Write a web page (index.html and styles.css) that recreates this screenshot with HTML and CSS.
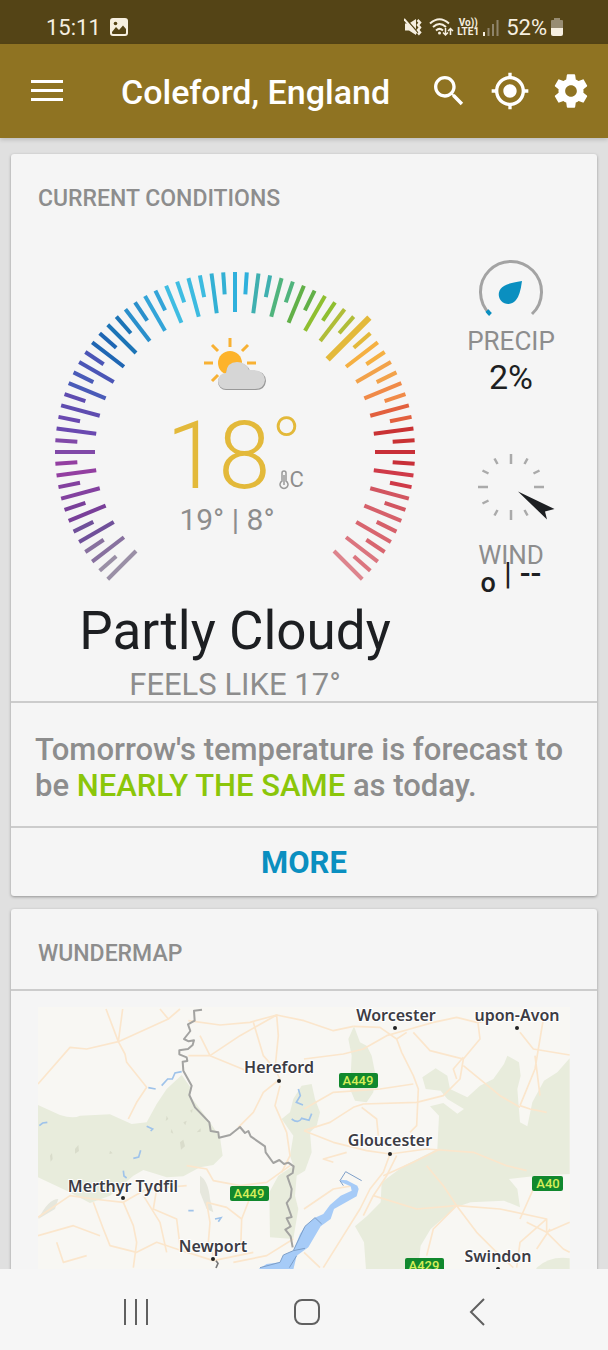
FILE: index.html
```html
<!DOCTYPE html>
<html lang="en">
<head>
    <meta charset="UTF-8">
    <meta name="viewport" content="width=device-width, initial-scale=1.0">
    <title>Coleford, England</title>
    <link rel="stylesheet" href="styles.css">
</head>
<body>
<div class="status-bar">
    <span class="clock">15:11</span>
    <svg class="status-icon" width="18" height="18" viewBox="0 0 18 18">
        <rect width="18" height="18" rx="3" fill="#f6efe0"/>
        <path d="M2 14 L6 9 L9 12 L13 7.500 L16 11 V15 Q16 16 15 16 H3 Q2 16 2 15Z" fill="#544416"/>
        <circle cx="5.500" cy="5.500" r="1.800" fill="#544416"/>
    </svg>
    <div class="status-right">
        <svg width="18" height="18" viewBox="0 0 18 18">
            <path d="M1 5.500 H5 L12 1 V17 L5 12.500 H1Z" fill="#f6efe0"/>
            <path d="M1 0 L13 13.500" stroke="#544416" stroke-width="1.500"/>
            <path d="M0 1 L12.500 15.500" stroke="#f6efe0" stroke-width="2"/>
            <path d="M13.500 2 l2.500 2.500 l-2 2.500 l2 2.500 l-2 2.500 l2 2.500 l-2 2" stroke="#f6efe0" stroke-width="2.500" fill="none"/>
        </svg>
        <svg class="wifi" width="25" height="20" viewBox="0 0 25 20">
            <g fill="none" stroke="#f6efe0" stroke-width="2">
                <path d="M1 6.500 Q10.500 -2 20 6.500"/>
                <path d="M4 10 Q10.500 4 17 10"/>
                <path d="M7 13.500 Q10.500 10.300 14 13.500"/>
            </g>
            <circle cx="10.500" cy="16" r="1.500" fill="#f6efe0"/>
            <path d="M16.500 11 V18 M14 15.500 L16.500 18 L19 15.500 M21.500 18 V11.500 M19 14 L21.500 11.500 L24 14" fill="none" stroke="#f6efe0" stroke-width="1.500"/>
        </svg>
        <span class="volte"><span>Vo))</span><span>LTE1</span></span>
        <svg class="signal" width="16" height="17" viewBox="0 0 16 17">
            <path d="M1 17 V13" stroke="#f6efe0" stroke-width="2"/>
            <path d="M5.500 17 V9 M10 17 V5 M14.500 17 V1" stroke="#8f846a" stroke-width="2"/>
        </svg>
        <span class="battery-text">52%</span>
        <svg width="12" height="18" viewBox="0 0 12 18">
            <path d="M3 0 H9 V2 H11 Q12 2 12 3 V10 H0 V3 Q0 2 1 2 H3Z" fill="#978c72"/>
            <path d="M0 10 H12 V16 Q12 18 10 18 H2 Q0 18 0 16Z" fill="#f6efe0"/>
        </svg>
    </div>
</div>

<header class="app-bar">
    <button class="icon-button" aria-label="Menu">
        <svg width="32" height="24" viewBox="0 0 32 24"><path d="M0 2.500 H32 M0 11.500 H32 M0 20.500 H32" stroke="#fff" stroke-width="3"/></svg>
    </button>
    <h1 class="location">Coleford, England</h1>
    <div class="actions">
        <button class="icon-button" aria-label="Search">
            <svg width="40" height="40" viewBox="0 0 24 24" fill="#fff"><path d="M15.500 14h-.79l-.28-.27C15.410 12.590 16 11.110 16 9.500 16 5.910 13.090 3 9.500 3S3 5.910 3 9.500 5.910 16 9.500 16c1.610 0 3.090-.59 4.230-1.570l.27.28v.79l5 4.990L20.490 19l-4.990-5zm-6 0C7.010 14 5 11.990 5 9.500S7.010 5 9.500 5 14 7.010 14 9.500 11.990 14 9.500 14z"/></svg>
        </button>
        <button class="icon-button" aria-label="My location">
            <svg width="40" height="40" viewBox="0 0 24 24" fill="#fff"><path d="M12 8c-2.210 0-4 1.790-4 4s1.790 4 4 4 4-1.790 4-4-1.790-4-4-4zm8.940 3c-.46-4.170-3.770-7.480-7.940-7.940V1h-2v2.060C6.830 3.520 3.520 6.830 3.060 11H1v2h2.060c.46 4.170 3.770 7.480 7.940 7.940V23h2v-2.060c4.170-.46 7.480-3.770 7.940-7.940H23v-2h-2.060zM12 19c-3.870 0-7-3.130-7-7s3.130-7 7-7 7 3.130 7 7-3.130 7-7 7z"/></svg>
        </button>
        <button class="icon-button" aria-label="Settings">
            <svg width="40" height="40" viewBox="0 0 24 24" fill="#fff"><path d="M19.430 12.980c.04-.32.07-.64.07-.98s-.03-.66-.07-.98l2.110-1.650c.19-.15.24-.42.12-.64l-2-3.460c-.12-.22-.39-.3-.61-.22l-2.490 1c-.52-.4-1.080-.73-1.690-.98l-.38-2.650C14.460 2.180 14.250 2 14 2h-4c-.25 0-.46.18-.49.42l-.38 2.650c-.61.25-1.170.59-1.690.98l-2.490-1c-.23-.09-.49 0-.61.22l-2 3.460c-.13.22-.07.49.12.64l2.110 1.650c-.04.32-.07.65-.07.98s.03.66.07.98l-2.110 1.650c-.19.15-.24.42-.12.64l2 3.460c.12.22.39.3.61.22l2.490-1c.52.4 1.080.73 1.690.98l.38 2.650c.03.24.24.42.49.42h4c.25 0 .46-.18.49-.42l.38-2.650c.61-.25 1.170-.59 1.690-.98l2.490 1c.23.09.49 0 .61-.22l2-3.460c.12-.22.07-.49-.12-.64l-2.110-1.650zM12 15.500c-1.930 0-3.500-1.570-3.500-3.500s1.570-3.500 3.500-3.500 3.500 1.570 3.500 3.500-1.570 3.500-3.500 3.500z"/></svg>
        </button>
    </div>
</header>

<main class="content">
    <section class="card">
        <h2 class="card-title">CURRENT CONDITIONS</h2>
        <div class="conditions">
            <div class="main-reading">
                <div class="gauge">
                    <svg class="gauge-ring" id="ring" width="384" height="324" viewBox="-192 -193 384 324"></svg>
                    <div class="gauge-center">
                        <svg width="62" height="54" viewBox="0 0 62 54">
                            <g stroke="#f8b133" stroke-width="3">
                                <path d="M26 0 V9 M8 7 L14 13 M0 25 H9 M8 43 L14 37 M38 13 L44 7 M43 25 H52"/>
                            </g>
                            <circle cx="26" cy="25" r="12" fill="#fdb32b"/>
                            <path d="M22 52 A8 8 0 0 1 22 36 Q23 25 34 25 Q43 25 46 33 Q61 31 62 43 Q61 52 52 52Z" fill="#999"/>
                            <path d="M22 51 A8 8 0 0 1 22 35 Q23 24 33 24 Q42 24 45 32 Q60 31 61 42 Q60 51 51 51Z" fill="#d6d6d6"/>
                        </svg>
                        <div class="temp">
                            <span class="temp-value">18</span>
                            <span class="temp-side">
                                <span class="degree">°</span>
                                <span class="unit">
                                    <svg width="10" height="20" viewBox="0 0 10 20" fill="none" stroke="#999" stroke-width="1.500">
                                        <path d="M3 11 V3 Q3 1 5 1 Q7 1 7 3 V11 A4 4 0 1 1 3 11Z"/>
                                        <path d="M5 5 V15"/>
                                    </svg>C
                                </span>
                            </span>
                        </div>
                        <div class="high-low">19° | 8°</div>
                    </div>
                </div>
                <div class="summary">Partly Cloudy</div>
                <div class="feels">FEELS LIKE 17°</div>
            </div>
            <div class="side">
                <div class="metric">
                    <svg width="66" height="66" viewBox="-33 -33 66 66">
                        <path d="M-21 22 A30.500 30.500 0 1 1 21 22" fill="none" stroke="#a3a3a3" stroke-width="3"/>
                        <path d="M-20.500 22.500 A30.500 30.500 0 0 1 -24 18.500" fill="none" stroke="#0a8fc0" stroke-width="4"/>
                        <path d="M11 -11 Q9 4 5 8 A9.500 9.500 0 1 1 -7 -6 Q-3 -9 11 -11Z" fill="#0a8fc0"/>
                    </svg>
                    <span class="metric-name">PRECIP</span>
                    <span class="metric-value">2%</span>
                </div>
                <div class="metric wind">
                    <svg width="88" height="68" viewBox="-44 -34 88 68">
                        <path d="M0 -33 V-23 M0 23 V33 M-33 0 H-23 M23 0 H33 M-16.500 -28.500 L-13.500 -23 M16.500 -28.500 L13.500 -23 M-28.500 -16.500 L-22.500 -13.500 M28.500 -16.500 L22.500 -13.500 M-28.500 16.500 L-22.500 13.500 M-16.500 28.500 L-13.500 23 M16.500 28.500 L13.500 23" stroke="#aaa" stroke-width="2.500"/>
                        <path d="M7 4.500 L43.500 22 L34 24.500 L36 32.500Z" fill="#1d1f22"/>
                    </svg>
                    <span class="metric-name">WIND</span>
                    <span class="wind-value"><span class="wind-dir">o</span><span>|</span><span class="wind-speed">--</span></span>
                </div>
            </div>
        </div>
        <p class="forecast">Tomorrow's temperature is forecast to be <span class="same">NEARLY THE SAME</span> as today.</p>
        <button class="more">MORE</button>
    </section>

    <section class="card">
        <h2 class="card-title map-title">WUNDERMAP</h2>
        <div class="map-box">
            <svg class="map" viewBox="0 0 532 300">
                <rect width="532" height="300" fill="#f8f7f3"/>
                <g transform="translate(-38 -18) scale(.33333)">
                    <!-- parks -->
                    <g fill="#e8ecdc">
                        <path d="M114 348 L180 378 Q220 390 240 380 L330 376 L395 405 L440 400 L470 345 L500 300 L545 258 L575 300 L570 320 L630 400 L660 445 L668 500 L640 528 L600 535 L550 562 L500 565 L430 543 L400 560 L330 620 L270 642 L200 605 L114 565Z"/>
                        <path d="M880 330 L905 290 L935 285 L945 330 L960 370 L950 410 L930 430 L935 490 L915 545 L890 560 L885 620 L895 660 L880 750 L810 745 L808 610 L835 560 L880 530 L870 500 L880 440 L845 390 L870 370Z"/>
                        <path d="M1062 112 L1080 160 L1100 170 L1115 200 L1125 250 L1120 310 L1100 340 L1065 335 L1050 300 L1055 200 L1045 150Z"/>
                        <path d="M1267 265 L1307 238 L1342 260 L1350 300 L1402 325 L1440 290 L1480 270 L1512 225 L1522 200 L1557 220 L1562 260 L1552 300 L1560 400 L1582 412 L1597 340 L1632 275 L1672 250 L1709 208 V555 L1612 560 L1527 570 L1552 600 L1560 655 L1512 635 L1412 640 L1367 655 L1292 720 L1262 770 L1250 870 L1100 870 L1092 760 L1065 712 L1102 680 L1142 640 L1145 580 L1212 530 L1312 480 L1317 380 L1290 352 L1330 342 L1372 374 L1392 360 L1342 330 L1322 305 L1277 300Z"/>
                        <path d="M1610 836 Q1650 800 1709 808 V870 H1600Z"/>
                    </g>
                    <path d="M600 560 q25 15 30 70 l10 40 -20 -10 -20 -50Z M115 690 q30 -60 60 -60 l-10 30Z" fill="#e6e7dd"/>
                    <g fill="#d9dccb">
                        <path d="M225 480 l10 -12 2 18 -12 8Z M150 500 l6 -8 2 18 -6 8Z M540 460 l10 -8 5 20 -12 10Z M500 380 l5 10 -8 6Z M550 400 l10 -5 -4 14Z M590 430 l12 -12 0 10Z M570 365 l8 -5 -2 12Z M330 485 l8 8 -10 2Z M515 420 l5 14 -8 -4Z"/>
                    </g>
                    <!-- main roads -->
                    <g fill="none" stroke="#fbe6cc" stroke-width="5" stroke-linejoin="round">
                        <path d="M114 285 L210 175 L260 180 L355 158 L375 195 L380 220 L440 295 L410 340 L385 390 M355 158 L505 90 L540 60 M355 158 L318 60 M355 158 L368 60 M505 90 L480 60 M565 95 L660 108 L750 100 L830 78 L912 95 L1000 125 L1060 112"/>
                        <path d="M565 200 L630 200 L720 140 L830 78 L835 140 L825 240 L840 270 M630 200 L600 140 M630 200 L740 245 M760 100 L790 200 L825 240 M840 270 L790 310 L760 370 L715 415 M840 290 L825 350 L860 430 L870 500 L845 550"/>
                        <path d="M560 530 L620 540 L640 575 L720 590 L800 580 L870 530 M620 640 L630 700 L625 760 L640 800 M620 640 L680 655 L725 690 L722 780 M725 690 L760 600 M700 820 L800 800 L880 750 M114 685 L210 620 L280 630 L370 640 L400 710 L410 760 L400 836 M280 640 L310 720 L330 770 L410 790 L470 760 L530 780 L640 815 L760 790"/>
                        <path d="M430 620 L480 700 L500 790 M470 600 L460 660 L530 690 L540 770 M370 640 L440 600 L560 590 M114 740 L220 710 L300 740 M170 760 L190 820 L260 800"/>
                        <path d="M912 210 L1030 195 L1090 180 L1160 140 L1230 120 L1300 100 L1370 85 L1430 100 L1560 80 M1060 112 L1140 115 L1190 150 L1220 130 M1190 150 L1205 190 L1240 260 L1255 300 L1250 410 L1230 430"/>
                        <path d="M1240 130 L1290 185 L1370 205 L1390 210 L1440 150 L1430 70 M1390 210 L1380 270 L1330 320 L1250 340 L1090 345 L1060 355 L990 400 L912 425 M1390 230 L1500 320 L1560 355 M912 360 L1000 310 L1140 300 L1240 285 M1390 205 L1360 240 L1370 270"/>
                        <path d="M1560 130 L1600 180 L1709 198 M1630 90 L1605 240 L1560 350 M1605 200 L1620 320 M1560 350 L1590 360 L1640 370"/>
                        <path d="M912 425 L1000 460 L1100 485 L1170 495 L1280 480 L1420 490 L1520 530 L1580 545 M1170 495 L1150 550 L1110 600 L1080 660 L1030 740 L970 836 M1190 500 L1160 560 L1120 620 L1090 680 M1280 530 L1330 590 L1370 650 L1430 730 L1500 800 L1540 836"/>
                        <path d="M1150 560 L1240 520 L1320 480 M1370 650 L1250 660 L1120 620 M1370 650 L1500 660 L1640 690 L1560 760 L1550 836 M1370 650 L1300 720 L1280 800 M1640 690 L1640 730 L1709 700 M1640 730 L1690 780 L1709 790 M1640 730 L1580 700 M1600 600 L1560 690 M1650 720 L1610 780"/>
                        <path d="M912 660 L1000 600 L1060 590 M1085 355 L1130 390 L1135 440 M1000 520 L970 510 L1040 490 M912 790 L960 836"/>
                    </g>
                    <!-- water -->
                    <path d="M760 850 L800 825 L840 820 L850 798 L880 785 L900 735 L915 712 L945 686 L970 675 L990 648 L1022 620 L1055 605 L1052 592 L1024 580 L1020 572 L1040 574 L1072 590 L1076 600 L1070 622 L1002 660 L992 690 L962 712 L925 775 L890 800 L878 850Z" fill="#a6cbf7"/>
                    <path d="M1030 590 L1020 575 L1037 548 L1085 575 M780 836 L840 820 L850 798 L880 785 L915 712 L945 686 L965 705 M880 785 L915 778 M868 836 L890 800" fill="none" stroke="#7d9fc8" stroke-width="3"/>
                    <path d="M485 290 l18 -20 14 0 8 -18 20 -4 M445 296 l22 4 M118 410 l10 -8 14 -2 M440 412 l18 8 -6 6 M400 508 l16 -4 6 -20 M370 545 l2 16 8 6 M645 690 l18 -4 -8 12 M895 300 l6 20 -12 20 20 8 M875 390 q20 15 30 -2 l22 6 8 -20 M565 665 l16 0" fill="none" stroke="#9fc3ea" stroke-width="5"/>
                    <!-- England / Wales border -->
                    <path d="M606 62 L582 65 L584 95 L564 106 L571 126 L552 150 L566 157 L582 154 L578 168 L564 180 L538 184 L538 196 L560 205 L562 216 L548 218 L550 245 L575 290 L568 318 L585 355 L628 400 L632 426 L655 430 L657 446 L690 438 L720 414 L735 432 L745 426 L752 442 L795 472 L797 490 L820 522 L838 513 L852 525 L865 521 L881 532 L878 552 L862 562 L875 600 L872 626 L860 642 L875 684 L860 688 L872 712 L856 722 L872 742 L878 775" fill="none" stroke="#a3a3a1" stroke-width="6" stroke-linejoin="round"/>
                    <path d="M648 815 l6 8 -6 14" fill="none" stroke="#777" stroke-width="5"/>
                </g>
                <g class="town">
                    <text x="358" y="14">Worcester</text>
                    <text x="479" y="14">upon-Avon</text>
                    <text x="241" y="66">Hereford</text>
                    <text x="352" y="139">Gloucester</text>
                    <text x="85" y="185">Merthyr Tydfil</text>
                    <text x="175" y="245">Newport</text>
                    <text x="460" y="255">Swindon</text>
                </g>
                <g fill="#222">
                    <circle cx="357" cy="21" r="2"/><circle cx="479" cy="21" r="2"/><circle cx="241" cy="74" r="2"/>
                    <circle cx="352" cy="147" r="2"/><circle cx="85" cy="191" r="2"/><circle cx="175" cy="252" r="2"/><circle cx="460" cy="262" r="2"/>
                </g>
                <g fill="#11882d">
                    <rect x="301" y="66" width="39" height="15" rx="2"/><rect x="192" y="179" width="39" height="15" rx="2"/>
                    <rect x="494" y="169" width="31" height="15" rx="2"/><rect x="367" y="251" width="39" height="15" rx="2"/>
                </g>
                <g class="road">
                    <text x="320" y="78">A449</text>
                    <text x="211" y="191">A449</text>
                    <text x="510" y="181">A40</text>
                    <text x="386" y="263">A429</text>
                </g>
            </svg>
        </div>
    </section>
</main>

<nav class="nav-bar">
    <button class="icon-button" aria-label="Recent apps">
        <svg width="26" height="28" viewBox="0 0 26 28"><path d="M2 1 V27 M13 1 V27 M24 1 V27" stroke="#606060" stroke-width="2"/></svg>
    </button>
    <button class="icon-button" aria-label="Home">
        <svg width="28" height="28" viewBox="0 0 28 28"><rect x="2" y="2" width="24" height="24" rx="7" fill="none" stroke="#606060" stroke-width="2"/></svg>
    </button>
    <button class="icon-button" aria-label="Back">
        <svg width="26" height="28" viewBox="0 0 26 28"><path d="M20 1 L7 14 L20 27" fill="none" stroke="#606060" stroke-width="2"/></svg>
    </button>
</nav>

<script>
    // One colour for each long tick, from cold to hot
    const colors = [
        '#9a8fa6', '#88719f', '#70509a', '#793f99', '#83419f', '#933fa1', '#8149a8', '#6a49b0', '#5f4cb0',
        '#4a5bb8', '#4b55b6', '#1f66b3', '#1c74b6', '#2a8fcb', '#33a4d8', '#3fbde2', '#3dbbe0', '#33b0d4',
        '#2fb0dc', '#3fb0b0', '#50b47d', '#62b048', '#8fbf30', '#b0bd38', '#e3b93a', '#f5b042', '#f2a24a',
        '#f08a48', '#e2603e', '#c93234', '#c82f38', '#cf3a48', '#d25560', '#d6606a', '#d8656f', '#db757f', '#dd848d'
    ];
    const current = 48;
    const ring = document.getElementById('ring');

    // Draw the ticks, every second one is short
    for (let i = 0; i <= 72; i++) {
        const line = document.createElementNS('http://www.w3.org/2000/svg', 'line');
        const long = i % 2 === 0;
        line.setAttribute('y1', i === current ? -190 : -180);
        line.setAttribute('y2', i === current ? -131 : (long ? -140 : -158));
        line.setAttribute('stroke', colors[Math.floor(i / 2)]);
        line.setAttribute('stroke-width', i === current ? 6 : 4);
        line.setAttribute('transform', `rotate(${-135 + i * 3.75})`);
        ring.appendChild(line);
    }
</script>
</body>
</html>
```
FILE: styles.css
```css
* {
    box-sizing: border-box;
}

body {
    margin: 0;
    height: 100vh;
    display: flex;
    flex-direction: column;
    font-family: Roboto, 'Liberation Sans', sans-serif;
    background-color: #e0e0e0;
    color: #8d8d8d;
}

svg {
    display: block;
    flex: none;
}

button {
    padding: 0;
    border: none;
    background: none;
    font-family: inherit;
    cursor: pointer;
}

.status-bar {
    display: flex;
    align-items: center;
    height: 44px;
    flex: none;
    padding: 10px 45px 0 46px;
    background-color: #544416;
    color: #f6efe0;
    font-size: 22px;
}

.status-icon {
    margin-left: 9px;
}

.status-right {
    display: flex;
    align-items: center;
    margin-left: auto;
}

.wifi {
    margin-left: 7px;
}

.volte {
    display: flex;
    flex-direction: column;
    align-items: center;
    margin-left: 3px;
    font-size: 10px;
    font-weight: 700;
    line-height: 9px;
}

.signal {
    margin-left: 4px;
}

.battery-text {
    margin: 0 4px 0 7px;
}

.app-bar {
    display: flex;
    align-items: center;
    height: 94px;
    flex: none;
    padding: 0 17px 0 31px;
    background-color: #8f7322;
    box-shadow: 0 2px 4px rgba(0, 0, 0, 0.15);
    z-index: 1;
}

.location {
    margin: 2px 0 0 58px;
    color: #fff;
    font-size: 34px;
    font-weight: 500;
    line-height: 40px;
    white-space: nowrap;
}

.actions {
    display: flex;
    gap: 21px;
    margin-left: auto;
}

.content {
    flex: 1;
    min-height: 0;
    overflow: hidden;
    padding: 16px 11px 0;
}

.card {
    margin-bottom: 13px;
    background-color: #f5f5f5;
    border-radius: 3px;
    box-shadow: 0 1px 3px rgba(0, 0, 0, 0.35);
}

.card-title {
    margin: 0;
    padding: 33px 27px 0;
    font-size: 23px;
    font-weight: 500;
    line-height: 24px;
}

.conditions {
    display: grid;
    grid-template-columns: minmax(0, 1fr) 104px;
    padding: 48px 34px 0 0;
    border-bottom: 2px solid #ccc;
}

.main-reading {
    display: flex;
    flex-direction: column;
    align-items: center;
}

.gauge {
    display: grid;
    justify-items: center;
}

.gauge-ring,
.gauge-center {
    grid-area: 1 / 1;
}

.gauge-center {
    display: flex;
    flex-direction: column;
    align-items: center;
    padding-top: 79px;
}

.temp {
    display: flex;
    margin-top: 16px;
    height: 96px;
    color: #e3b93a;
}

.temp-value {
    font-size: 94px;
    font-weight: 300;
    line-height: 96px;
}

.temp-side {
    display: flex;
    flex-direction: column;
}

.degree {
    padding-top: 18px;
    font-size: 84px;
    font-weight: 200;
    line-height: 44px;
}

.unit {
    display: flex;
    align-items: center;
    padding-left: 9px;
    color: #8d8d8d;
    font-size: 22px;
    line-height: 20px;
}

.high-low {
    margin-top: -2px;
    padding-right: 16px;
    font-size: 30px;
    line-height: 36px;
}

.summary {
    margin-top: 18px;
    color: #1d1f22;
    font-size: 53px;
    line-height: 60px;
}

.feels {
    margin-top: 8px;
    font-size: 31px;
    line-height: 32px;
}

.side {
    display: flex;
    flex-direction: column;
}

.metric {
    display: flex;
    flex-direction: column;
    align-items: center;
}

.metric-name {
    font-size: 26px;
    line-height: 32px;
}

.metric-value {
    color: #1d1f22;
    font-size: 34px;
    line-height: 40px;
}

.wind {
    margin-top: 56px;
}

.wind .metric-name {
    margin-top: 18px;
}

.wind-value {
    display: flex;
    gap: 8px;
    margin-top: -16px;
    color: #1d1f22;
    font-size: 32px;
    line-height: 36px;
}

.wind-dir {
    padding-top: 10px;
    font-size: 27px;
    font-weight: 500;
}

.wind-speed {
    font-weight: 500;
}

.forecast {
    margin: 0;
    padding: 29px 24px 22px;
    font-size: 31px;
    font-weight: 500;
    line-height: 36px;
    border-bottom: 2px solid #ccc;
}

.same {
    color: #8bc60a;
}

.more {
    display: block;
    width: 100%;
    height: 68px;
    padding-top: 2px;
    color: #0a8fc0;
    font-size: 31px;
    font-weight: 700;
    line-height: 36px;
}

.map-title {
    padding-bottom: 23px;
    border-bottom: 2px solid #ccc;
}

.map-box {
    padding: 16px 27px;
}

.map {
    width: 100%;
    height: auto;
}

.town {
    font-family: 'Noto Sans', sans-serif;
    font-size: 16px;
    font-weight: 600;
    text-anchor: middle;
    fill: #3c3c44;
    stroke: #fff;
    stroke-width: 2px;
    paint-order: stroke;
}

.road {
    font-size: 13px;
    font-weight: 500;
    text-anchor: middle;
    fill: #d5ee5a;
}

.nav-bar {
    display: flex;
    justify-content: space-between;
    align-items: center;
    flex: none;
    height: 81px;
    padding: 4px 118px 0 123px;
    background-color: #f6f6f6;
    z-index: 1;
}
```
